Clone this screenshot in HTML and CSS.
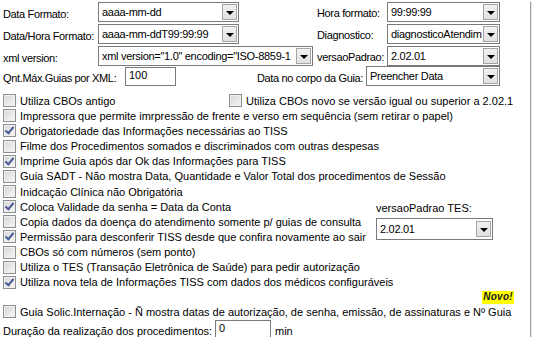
FILE: index.html
```html
<!DOCTYPE html>
<html lang="pt-BR">
<head>
    <meta charset="UTF-8">
    <title>Configuração TISS</title>
    <link rel="stylesheet" href="styles.css">
</head>
<body>
    <div class="panel">
        <!-- formatos -->
        <div class="top">
            <div class="row r1">
                <label class="lbl-l">Data Formato:</label>
                <div class="combo w-date"><span class="val">aaaa-mm-dd</span><span class="btn"></span></div>
                <label class="lbl-r">Hora formato:</label>
                <div class="combo w-right"><span class="val">99:99:99</span><span class="btn"></span></div>
            </div>
            <div class="row r2">
                <label class="lbl-l">Data/Hora Formato:</label>
                <div class="combo w-date"><span class="val">aaaa-mm-ddT99:99:99</span><span class="btn"></span></div>
                <label class="lbl-r">Diagnostico:</label>
                <div class="combo w-right"><span class="val">diagnosticoAtendim</span><span class="btn"></span></div>
            </div>
            <div class="row r3">
                <label class="lbl-l">xml version:</label>
                <div class="combo w-xml"><span class="val">xml version="1.0" encoding="ISO-8859-1</span><span class="btn"></span></div>
                <label class="lbl-r short">versaoPadrao:</label>
                <div class="combo w-right"><span class="val">2.02.01</span><span class="btn"></span></div>
            </div>
            <div class="row r4">
                <label class="lbl-qnt">Qnt.Máx.Guias por XML:</label>
                <div class="edit w-qnt">100</div>
                <label class="lbl-corpo">Data no corpo da Guia:</label>
                <div class="combo w-corpo"><span class="val">Preencher Data</span><span class="btn"></span></div>
            </div>
        </div>

        <!-- opções -->
        <div class="checks">
            <div class="chk-row full">
                <div class="chk first"><span class="box"></span>Utiliza CBOs antigo</div>
                <div class="chk"><span class="box"></span>Utiliza CBOs novo se versão igual ou superior a 2.02.1</div>
            </div>
            <div class="chk full"><span class="box"></span>Impressora que permite imrpressão de frente e verso em sequência (sem retirar o papel)</div>
            <div class="chk full"><span class="box on"></span>Obrigatoriedade das Informações necessárias ao TISS</div>
            <div class="chk full"><span class="box"></span>Filme dos Procedimentos somados e discriminados com outras despesas</div>
            <div class="chk full"><span class="box on"></span>Imprime Guia após dar Ok das Informações para TISS</div>
            <div class="chk full"><span class="box"></span>Guia SADT - Não mostra Data, Quantidade e Valor Total dos procedimentos de Sessão</div>
            <div class="chk full"><span class="box"></span>Inidcação Clínica não Obrigatória</div>
            <div class="chk"><span class="box on"></span>Coloca Validade da senha = Data da Conta</div>
            <div class="chk"><span class="box"></span>Copia dados da doença do atendimento somente p/ guias de consulta</div>
            <div class="chk"><span class="box on"></span>Permissão para desconferir TISS desde que confira novamente ao sair</div>
            <div class="tes">
                <label>versaoPadrao TES:</label>
                <div class="combo w-tes"><span class="val">2.02.01</span><span class="btn"></span></div>
            </div>
            <div class="chk full"><span class="box"></span>CBOs só com números (sem ponto)</div>
            <div class="chk full"><span class="box"></span>Utiliza o TES (Transação Eletrônica de Saúde) para pedir autorização</div>
            <div class="chk full"><span class="box on"></span>Utiliza nova tela de Informações TISS com dados dos médicos configuráveis</div>
        </div>

        <div class="novo-row"><span class="novo">Novo!</span></div>
        <div class="chk solic"><span class="box"></span>Guia Solic.Internação - Ñ mostra datas de autorização, de senha, emissão, de assinaturas e Nº Guia</div>
        <div class="row dur">
            <label class="lbl-dur">Duração da realização dos procedimentos:</label>
            <div class="edit w-dur">0</div>
            <span class="min">min</span>
        </div>
    </div>
</body>
</html>
```

FILE: styles.css
```css
html, body {
    margin: 0;
    padding: 0;
    background: #ffffff;
}
body {
    font-family: "Liberation Sans", Arial, sans-serif;
    font-size: 11px;
    color: #000;
    width: 533px;
    height: 337px;
    overflow: hidden;
}
.panel {
    width: 530px;
    height: 337px;
    border-right: 1px solid #a0a0a0;
    box-shadow: 1px 0 0 #e3e3e3;
}
.top {
    width: 500px;
}
.top label {
    letter-spacing: -0.35px;
    white-space: nowrap;
}
.row {
    display: flex;
    align-items: center;
}
.r1 { margin-top: 2px; height: 20px; }
.r2 { margin-top: 2px; height: 20px; }
.r3 { margin-top: 2px; height: 20px; }
.r4 { margin-top: 0; height: 20px; }
.lbl-l {
    width: 95px;
    padding-left: 3px;
    padding-top: 3px;
    overflow: hidden;
}
.lbl-r {
    width: 71px;
    margin-left: 77px;
    padding-left: 1px;
    padding-top: 2px;
    box-sizing: border-box;
}
.lbl-r.short {
    margin-left: 3px;
}
.lbl-qnt {
    width: 122px;
    padding-left: 3px;
    padding-top: 3px;
}
.lbl-corpo {
    margin-left: auto;
    margin-right: 3px;
    padding-top: 3px;
}

/* combo box */
.combo {
    display: flex;
    align-items: center;
    height: 20px;
    box-sizing: border-box;
    border: 1px solid #7a7a7a;
    background: #fff;
    padding: 0 1px 0 3px;
    overflow: hidden;
}
.combo .val {
    flex: 1;
    white-space: nowrap;
    overflow: hidden;
    line-height: 16px;
    letter-spacing: -0.3px;
}
.combo .btn {
    position: relative;
    width: 15px;
    height: 16px;
    flex: none;
    box-sizing: border-box;
    border: 1px solid #a5a5a5;
    background: linear-gradient(#f2f2f2, #e0e0e0);
}
.combo .btn::after {
    content: "";
    position: absolute;
    left: 3px;
    top: 6px;
    border-left: 4px solid transparent;
    border-right: 4px solid transparent;
    border-top: 4px solid #000;
}
.w-date { width: 141px; }
.w-right { width: 113px; }
.w-xml { width: 215px; }
.w-corpo { width: 134px; }
.w-tes { width: 117px; height: 22px; }

.edit {
    height: 19px;
    box-sizing: border-box;
    border: 1px solid #7a7a7a;
    padding: 0 3px;
    line-height: 15px;
    background: #fff;
}
.w-qnt { width: 51px; }
.w-dur { width: 56px; }

/* checkboxes */
.checks {
    margin-top: 7px;
    display: grid;
    grid-template-columns: 373px 157px;
    grid-auto-rows: 15.17px;
}
.chk {
    display: flex;
    align-items: center;
    padding-left: 3px;
    white-space: nowrap;
    height: 15.17px;
    grid-column: 1;
}
.chk.full, .chk-row.full {
    grid-column: 1 / span 2;
}
.chk-row {
    display: flex;
}
.chk.first {
    width: 223px;
}
.box {
    width: 13px;
    height: 13px;
    flex: none;
    box-sizing: border-box;
    margin-right: 4px;
    border: 1px solid #8e8f8f;
    background: linear-gradient(135deg, #d6d6d6, #f7f7f7);
    box-shadow: inset 0 0 0 1px #f0f0f0;
    position: relative;
}
.box.on::after {
    content: "";
    position: absolute;
    left: 3px;
    top: 0px;
    width: 3px;
    height: 7px;
    border-right: 2px solid #4a5c93;
    border-bottom: 2px solid #4a5c93;
    transform: rotate(40deg);
}
.tes {
    grid-column: 2;
    grid-row: 8 / span 3;
    padding-left: 3px;
    padding-top: 3px;
}
.tes label {
    display: block;
    height: 16px;
}

.novo-row {
    height: 14px;
    display: flex;
    justify-content: flex-end;
    padding-right: 16px;
}
.novo {
    margin-top: 1px;
    background: #ffff00;
    font-weight: bold;
    font-style: italic;
    font-size: 10px;
    line-height: 11px;
    padding: 0 1px;
    color: #1a1a1a;
    letter-spacing: 0.3px;
}
.solic {
    height: 15px;
}
.dur {
    margin-top: 1px;
    height: 19px;
}
.lbl-dur {
    width: 212px;
    padding-left: 3px;
    padding-top: 2px;
    white-space: nowrap;
}
.min {
    margin-left: 4px;
    padding-top: 2px;
}
```
